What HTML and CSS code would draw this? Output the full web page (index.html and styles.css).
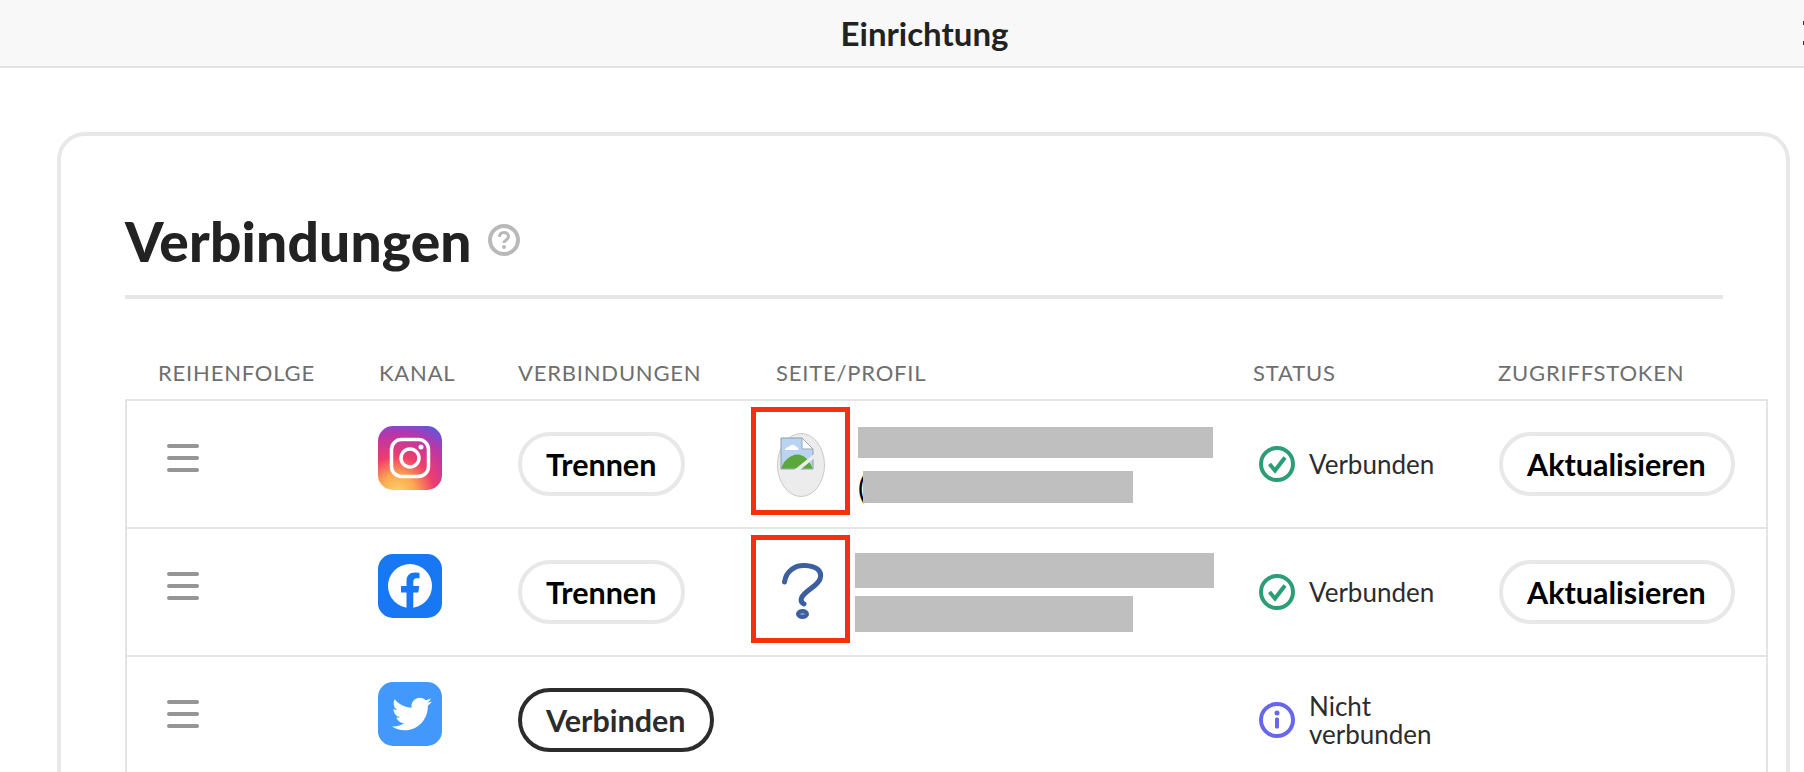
FILE: index.html
```html
<!DOCTYPE html>
<html lang="de">
<head>
  <meta charset="UTF-8">
  <title>Einrichtung</title>
  <link rel="stylesheet" href="styles.css">
</head>
<body>
<div class="topbar">
  <div class="topbar-title">Einrichtung</div>
  <div class="topbar-more"><span></span><span></span></div>
</div>

<div class="card">
  <div class="card-head">
    <h1 class="card-title">Verbindungen</h1>
    <svg class="help-icon" viewBox="0 0 32 32" width="32" height="32">
      <circle cx="16" cy="16" r="14" fill="none" stroke="#b9b9b9" stroke-width="4"/>
      <path d="M11.5 13c0-3 2-4.500 4.500-4.500s4.500 1.500 4.500 4c0 3.500-4.500 3.500-4.500 6.500" fill="none" stroke="#b9b9b9" stroke-width="3"/>
      <circle cx="16" cy="23" r="2" fill="#b9b9b9"/>
    </svg>
  </div>

  <div class="table-head">
    <div>REIHENFOLGE</div>
    <div>KANAL</div>
    <div>VERBINDUNGEN</div>
    <div>SEITE/PROFIL</div>
    <div>STATUS</div>
    <div>ZUGRIFFSTOKEN</div>
  </div>

  <div class="table">
    <!-- Instagram -->
    <div class="row">
      <div class="handle"><span></span><span></span><span></span></div>
      <svg class="channel" viewBox="0 0 64 64" width="64" height="64">
        <defs>
          <radialGradient id="ig" cx="0.3" cy="1.05" r="1.15">
            <stop offset="0" stop-color="#fdd56b"/>
            <stop offset="0.25" stop-color="#fba84f"/>
            <stop offset="0.5" stop-color="#ee3e6c"/>
            <stop offset="0.8" stop-color="#b936a8"/>
            <stop offset="1" stop-color="#6a52d8"/>
          </radialGradient>
        </defs>
        <rect width="64" height="64" rx="15" fill="url(#ig)"/>
        <rect x="13.500" y="13.500" width="37" height="37" rx="10" fill="none" stroke="#fff" stroke-width="3.500"/>
        <circle cx="32" cy="32" r="9" fill="none" stroke="#fff" stroke-width="3.500"/>
        <circle cx="43" cy="21" r="2.500" fill="#fff"/>
      </svg>
      <div><a class="btn">Trennen</a></div>
      <div class="profile">
        <div class="marked thumb">
          <svg viewBox="0 0 48 64" width="48" height="64">
            <ellipse cx="24" cy="32" rx="23.500" ry="31.500" fill="#ececec" stroke="#c9c9c9"/>
            <path d="M4 5h21l11 11v20H4z" fill="#b9d4f0" stroke="#8d9cab" stroke-width="1"/>
            <path d="M25 5v11h11z" fill="#fff" stroke="#9aa5b0"/>
            <path d="M8 17c0-2 2-3 4-3 1-3 6-3 7 0 2 0 3 1 2 3z" fill="#fff"/>
            <path d="M4.500 35.500c1-7 9-14 16-14 6 0 12 5 15 14z" fill="#5aa83a"/>
            <path d="M17 37l20-16v4.500L23 37z" fill="#ececec"/>
          </svg>
        </div>
        <div class="redacted-text redacted-text-1">
          <div class="redact line-a"></div>
          <div class="paren-line"><span class="paren">(</span><div class="redact line-b"></div></div>
        </div>
      </div>
      <div class="status">
        <svg viewBox="0 0 36 36" width="36" height="36">
          <circle cx="18" cy="18" r="16" fill="none" stroke="#2d9d78" stroke-width="4"/>
          <path d="M10.500 18l5.500 6.500 10-13" fill="none" stroke="#2d9d78" stroke-width="4"/>
        </svg>
        <span>Verbunden</span>
      </div>
      <div><a class="btn btn-token">Aktualisieren</a></div>
    </div>

    <!-- Facebook -->
    <div class="row">
      <div class="handle"><span></span><span></span><span></span></div>
      <svg class="channel" viewBox="0 0 64 64" width="64" height="64">
        <rect width="64" height="64" rx="15" fill="#1877f2"/>
        <circle cx="32" cy="32" r="22" fill="#fff"/>
        <path d="M28.500 54V38.500H23v-6.500h5.500v-5c0-5.500 3.300-8.500 8.200-8.500 2.400 0 4.800.4 4.800.4v5.400h-2.700c-2.700 0-3.500 1.700-3.500 3.400V32h6l-1 6.500h-5V54z" fill="#1877f2"/>
      </svg>
      <div><a class="btn">Trennen</a></div>
      <div class="profile">
        <div class="marked">
          <svg viewBox="0 0 48 64" width="48" height="64">
            <path d="M7.500 25C9 14 18 8 28 8.500 38 9 46 13 43 22 40 30 28 33 24.500 41 23.500 44 25 46 27 47" fill="none" stroke="#3d5f9f" stroke-width="5" stroke-linecap="round"/>
            <ellipse cx="25.500" cy="57" rx="4.500" ry="3" fill="#7f98c6" stroke="#3d5f9f" stroke-width="4"/>
          </svg>
        </div>
        <div class="redacted-text redacted-text-2">
          <div class="redact line-c"></div>
          <div class="redact line-d"></div>
        </div>
      </div>
      <div class="status">
        <svg viewBox="0 0 36 36" width="36" height="36">
          <circle cx="18" cy="18" r="16" fill="none" stroke="#2d9d78" stroke-width="4"/>
          <path d="M10.500 18l5.500 6.500 10-13" fill="none" stroke="#2d9d78" stroke-width="4"/>
        </svg>
        <span>Verbunden</span>
      </div>
      <div><a class="btn btn-token">Aktualisieren</a></div>
    </div>

    <!-- Twitter -->
    <div class="row">
      <div class="handle"><span></span><span></span><span></span></div>
      <svg class="channel" viewBox="0 0 64 64" width="64" height="64">
        <rect width="64" height="64" rx="15" fill="#4299fb"/>
        <path d="M54 19.500c-1.500.7-3 1.100-4.700 1.300 1.700-1 3-2.600 3.600-4.500-1.600.9-3.300 1.600-5.200 2-1.500-1.600-3.600-2.600-6-2.600-4.500 0-8.200 3.700-8.200 8.200 0 .6.100 1.300.2 1.900-6.800-.3-12.900-3.600-17-8.600-.7 1.200-1.100 2.600-1.100 4.100 0 2.800 1.500 5.400 3.600 6.800-1.300 0-2.600-.4-3.700-1v.1c0 4 2.800 7.300 6.600 8-.7.2-1.400.3-2.200.3-.5 0-1 0-1.500-.1 1 3.300 4.100 5.600 7.700 5.700-2.800 2.200-6.300 3.500-10.200 3.500-.7 0-1.300 0-2-.1 3.600 2.300 7.900 3.700 12.600 3.700 15.100 0 23.300-12.500 23.300-23.300v-1.100c1.600-1.200 3-2.600 4.200-4.300z" fill="#fff"/>
      </svg>
      <div><a class="btn btn-dark">Verbinden</a></div>
      <div class="profile"></div>
      <div class="status">
        <svg viewBox="0 0 36 36" width="36" height="36">
          <circle cx="18" cy="18" r="16" fill="none" stroke="#6767ec" stroke-width="4"/>
          <circle cx="18" cy="11" r="2.500" fill="#6767ec"/>
          <rect x="16" y="15.500" width="4" height="11" rx="1.500" fill="#6767ec"/>
        </svg>
        <span>Nicht<br>verbunden</span>
      </div>
      <div></div>
    </div>
  </div>
</div>
</body>
</html>
```

FILE: styles.css
```css
* {
  margin: 0;
  padding: 0;
  box-sizing: border-box;
}

html, body {
  height: 772px;
  overflow: hidden;
}

body {
  background-color: #ffffff;
  color: #2c2c2c;
  font-family: "Lato", "Open Sans", sans-serif;
}

/* Top bar */
.topbar {
  height: 68px;
  padding-left: 45px;
  background-color: #f8f8f8;
  border-bottom: 2px solid #e1e1e1;
  display: flex;
  align-items: center;
  justify-content: center;
  position: relative;
}

.topbar-title {
  font-size: 33px;
  font-weight: 700;
  color: #222222;
}

.topbar-more {
  position: absolute;
  right: 0;
  top: 21px;
  width: 1px;
  height: 24px;
  display: flex;
  flex-direction: column;
  justify-content: space-between;
}

.topbar-more span {
  height: 4px;
  background-color: #333333;
}

/* Card */
.card {
  width: 1733px;
  height: 800px;
  margin: 64px 0 0 57px;
  padding: 0 18px 0 64px;
  border: 4px solid #e8e8e8;
  border-radius: 28px;
}

.card-head {
  height: 163px;
  margin-right: 45px;
  padding-top: 68px;
  border-bottom: 4px solid #e6e6e6;
  display: flex;
  align-items: flex-start;
  gap: 16px;
}

.card-title {
  font-size: 55px;
  line-height: 74px;
  letter-spacing: 0.2px;
  font-weight: 900;
  color: #222222;
}

.help-icon {
  margin-top: 20px;
}

/* Table */
.table-head {
  display: grid;
  grid-template-columns: 254px 139px 258px 477px 245px 1fr;
  height: 100px;
  padding-top: 60px;
  font-size: 22px;
  line-height: 28px;
  letter-spacing: 0.8px;
  color: #6e6e6e;
}

.table-head div:first-child {
  padding-left: 33px;
}

.table {
  border: 2px solid #e4e4e4;
  border-bottom: 0;
}

.row {
  display: grid;
  grid-template-columns: 252px 139px 258px 477px 245px 1fr;
  height: 128px;
  align-items: center;
  border-bottom: 2px solid #e4e4e4;
}

.handle {
  display: flex;
  flex-direction: column;
  gap: 8px;
  padding-left: 40px;
  margin-bottom: 12px;
}

.handle span {
  width: 32px;
  height: 4px;
  border-radius: 2px;
  background-color: #959595;
}

.channel {
  margin-left: -1px;
  margin-bottom: 12px;
}

/* Buttons */
.btn {
  display: inline-flex;
  align-items: center;
  height: 64px;
  padding: 0 25px 0 24px;
  border: 4px solid #e8e8e8;
  border-radius: 32px;
  font-size: 30.5px;
  font-weight: 700;
  color: #000000;
}

.btn-token {
  margin-left: 1px;
}

.btn-dark {
  border-color: #2c2c2c;
  color: #2c2c2c;
}

/* Profile cell */
.profile {
  display: flex;
  align-items: center;
}

.marked {
  width: 99px;
  height: 108px;
  margin-left: -25px;
  margin-bottom: 7px;
  border: 5px solid #f5300f;
  display: flex;
  align-items: center;
  justify-content: center;
}

.thumb svg {
  margin-top: 8px;
}

.redacted-text {
  display: flex;
  flex-direction: column;
}

.redacted-text-1 {
  gap: 13px;
  margin-left: 8px;
  margin-top: 2px;
}

.redacted-text-2 {
  gap: 8px;
  margin-left: 5px;
}

.redact {
  background-color: #bfbfbf;
}

.line-a { width: 355px; height: 31px; }
.line-b { width: 270px; height: 32px; }
.line-c { width: 359px; height: 35px; }
.line-d { width: 278px; height: 36px; }

.paren-line {
  display: flex;
  align-items: center;
}

.paren {
  width: 5px;
  font-size: 30px;
  line-height: 32px;
  color: #000000;
}

/* Status */
.status {
  display: flex;
  align-items: center;
  gap: 14px;
  padding-left: 6px;
  font-size: 26px;
  line-height: 28px;
  color: #2c2c2c;
}
```
